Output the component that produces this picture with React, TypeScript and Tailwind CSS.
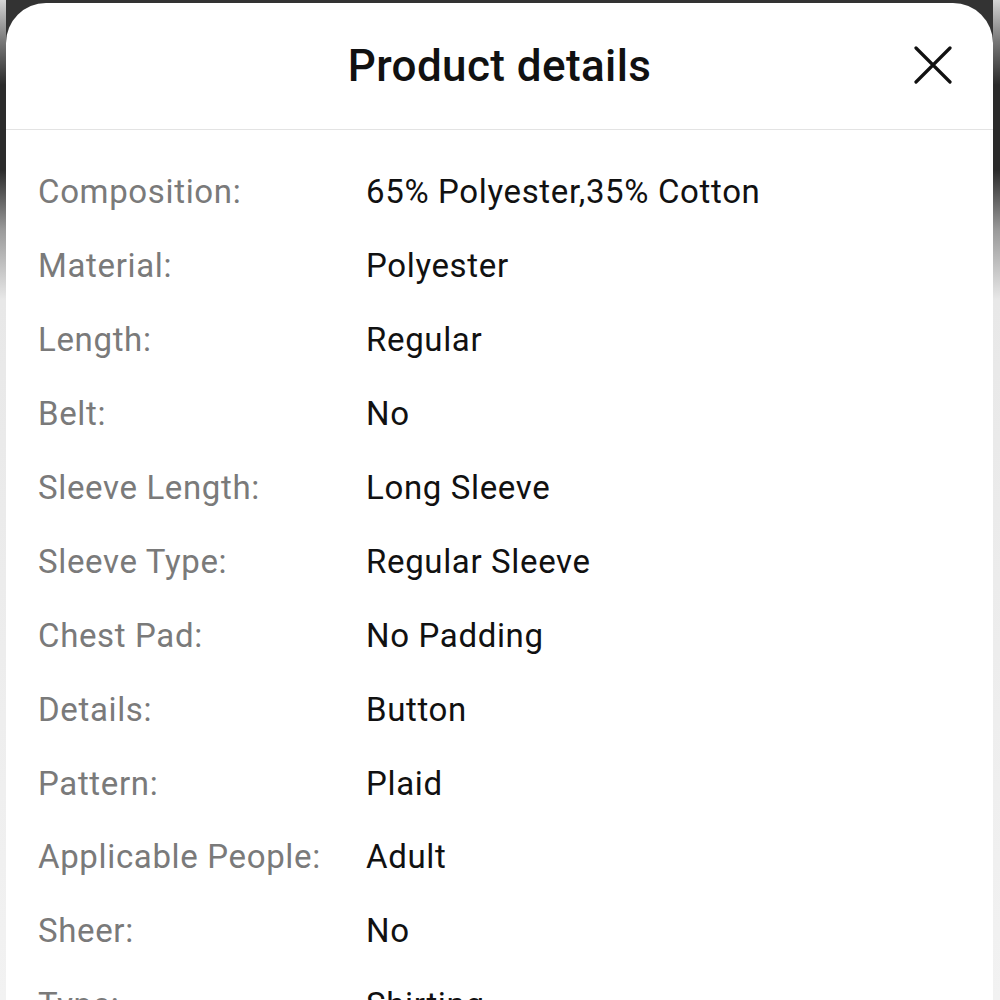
import React from "react";

const rows: [string, string][] = [
  ["Composition:", "65% Polyester,35% Cotton"],
  ["Material:", "Polyester"],
  ["Length:", "Regular"],
  ["Belt:", "No"],
  ["Sleeve Length:", "Long Sleeve"],
  ["Sleeve Type:", "Regular Sleeve"],
  ["Chest Pad:", "No Padding"],
  ["Details:", "Button"],
  ["Pattern:", "Plaid"],
  ["Applicable People:", "Adult"],
  ["Sheer:", "No"],
  ["Type:", "Shirting"],
];

export default function App() {
  return (
    <div
      className="flex h-[1000px] w-[1000px] overflow-hidden"
      style={{ fontFamily: "Roboto, 'Noto Sans', sans-serif" }}
    >
      <div className="w-[6px] shrink-0 bg-[linear-gradient(to_bottom,#d4d4d4_0px,#7a7a7a_40px,#2b2b2b_85px,#2b2b2b_170px,#9a9a9a_230px,#e8e8e8_300px,#f2f2f2_100%)]" />
      <div className="flex-1 bg-[#333333] pt-[3px]">
        <div className="h-full rounded-t-[40px] bg-white">
          <div className="relative flex h-[127px] items-center justify-center border-b border-[#e3e3e3]">
            <h1 className="text-[44px] font-medium leading-none text-[#111] tracking-[0.4px]">
              Product details
            </h1>
            <button className="absolute right-[40px] top-[42px] flex h-[40px] w-[40px] items-center justify-center">
              <svg width="38" height="38" viewBox="0 0 38 38" fill="none">
                <path
                  d="M2 2L36 36M36 2L2 36"
                  stroke="#111"
                  strokeWidth="3.2"
                  strokeLinecap="round"
                />
              </svg>
            </button>
          </div>
          <div className="flex flex-col pt-[25px] pl-[32px]">
            {rows.map(([k, v]) => (
              <div key={k} className="flex h-[73.9px] items-center text-[33px] leading-none tracking-[0.65px]">
                <div className="w-[328px] shrink-0 text-[#7a7a7a]">{k}</div>
                <div className="text-[#111]">{v}</div>
              </div>
            ))}
          </div>
        </div>
      </div>
      <div className="w-[7px] shrink-0 bg-[linear-gradient(to_bottom,#d4d4d4_0px,#7a7a7a_40px,#2b2b2b_85px,#2b2b2b_170px,#9a9a9a_230px,#e8e8e8_300px,#f2f2f2_100%)]" />
    </div>
  );
}
